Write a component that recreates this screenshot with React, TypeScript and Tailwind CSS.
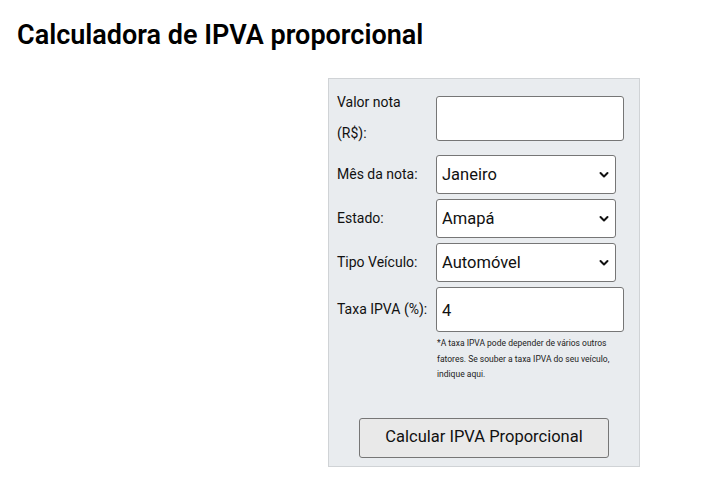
import React from 'react';

const font = { fontFamily: 'Roboto, "Liberation Sans", sans-serif' };

function Chevron() {
  return (
    <svg className="pointer-events-none absolute right-[7px] top-1/2 -translate-y-1/2" width="10" height="7" viewBox="0 0 10 7">
      <path d="M1.5 1.5 L5 5 L8.5 1.5" fill="none" stroke="#111" strokeWidth="2" strokeLinecap="round" strokeLinejoin="round" />
    </svg>
  );
}

function Select({ value, options }: { value: string; options: string[] }) {
  return (
    <div className="relative w-[180px]">
      <select
        defaultValue={value}
        className="h-[39px] w-full appearance-none rounded-[3px] border border-[#767676] bg-white pl-[5px] pt-[2px] text-[16.5px] text-[#111] outline-none"
        style={font}
      >
        {options.map(o => (
          <option key={o}>{o}</option>
        ))}
      </select>
      <Chevron />
    </div>
  );
}

export default function App() {
  return (
    <div className="min-h-[482px] w-[717px] bg-white text-black" style={font}>
      <h1 className="pl-[17px] pt-[18px] text-[27px] font-semibold leading-[34px] text-black">
        Calculadora de IPVA proporcional
      </h1>

      <div className="ml-[328px] mt-[26px] flex h-[389px] w-[312px] flex-col border border-[#d0d3d6] bg-[#e9ecef] pl-[8px] pt-[8px]">
        <div className="flex items-center">
          <label className="w-[99px] text-[14px] leading-[31px] text-[#111]">
            Valor nota
            <br />
            (R$):
          </label>
          <input className="h-[45px] w-[188px] rounded-[3px] border border-[#767676] bg-white px-[5px] text-[16.5px] outline-none" />
        </div>

        <div className="mt-[6px] flex items-center">
          <label className="w-[99px] text-[14px] leading-[31px] text-[#111]">Mês da nota:</label>
          <Select value="Janeiro" options={['Janeiro', 'Fevereiro', 'Março']} />
        </div>

        <div className="mt-[5px] flex items-center">
          <label className="w-[99px] text-[14px] leading-[31px] text-[#111]">Estado:</label>
          <Select value="Amapá" options={['Acre', 'Alagoas', 'Amapá']} />
        </div>

        <div className="mt-[5px] flex items-center">
          <label className="w-[99px] text-[14px] leading-[31px] text-[#111]">Tipo Veículo:</label>
          <Select value="Automóvel" options={['Automóvel', 'Moto']} />
        </div>

        <div className="mt-[5px] flex items-center">
          <label className="w-[99px] text-[14px] leading-[31px] text-[#111]">Taxa IPVA (%):</label>
          <input
            defaultValue="4"
            className="h-[45px] w-[188px] rounded-[3px] border border-[#767676] bg-white px-[5px] pt-[2px] text-[16.5px] text-[#111] outline-none"
            style={font}
          />
        </div>

        <p className="ml-[100px] mt-[4px] w-[185px] text-[8.5px] leading-[15.5px] text-[#222]">
          *A taxa IPVA pode depender de vários outros fatores. Se souber a taxa IPVA do seu veículo, indique aqui.
        </p>

        <div className="mt-[35px] flex justify-center pr-[8px]">
          <button
            className="h-[40px] w-[250px] rounded-[3px] border border-[#767676] bg-[#e9e9e9] text-[16.5px] text-[#111]"
            style={font}
          >
            Calcular IPVA Proporcional
          </button>
        </div>
      </div>
    </div>
  );
}
